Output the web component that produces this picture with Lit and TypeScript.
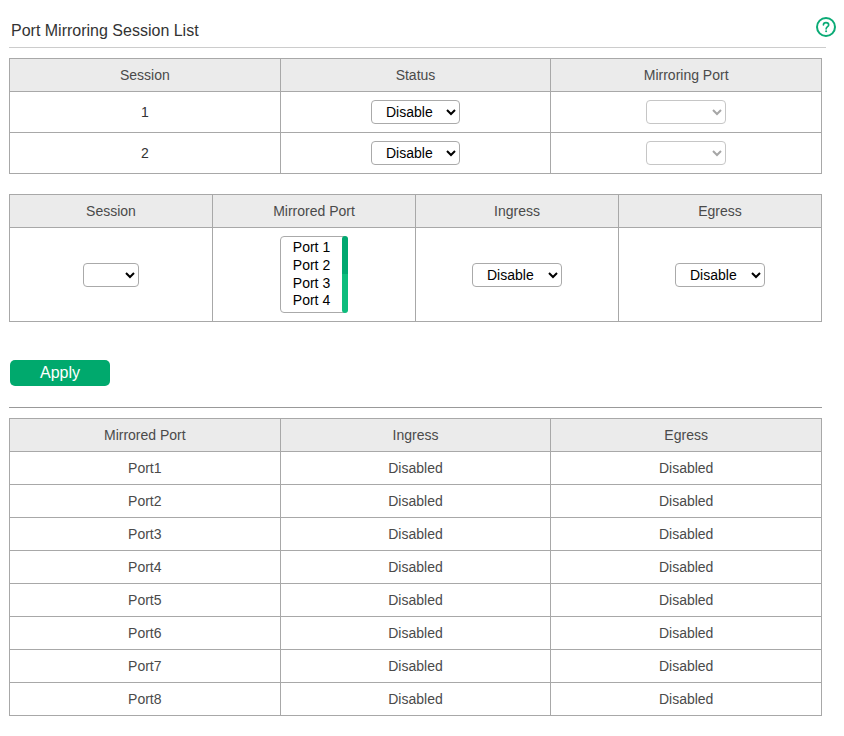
import { LitElement, html, css } from "lit";
import { customElement } from "lit/decorators.js";

@customElement("app-root")
export class AppRoot extends LitElement {
  static styles = css`
    :host {
      display: block;
      width: 844px;
      height: 736px;
      box-sizing: border-box;
      padding: 0 0 0 9px;
      background: #fff;
      font-family: "Liberation Sans", Arial, sans-serif;
      font-size: 14px;
      color: #4a4a4a;
    }
    .title-bar {
      display: flex;
      justify-content: space-between;
      width: 817px;
      height: 48px;
      box-sizing: border-box;
      border-bottom: 1px solid #ccc;
    }
    .title {
      margin: 21px 0 0 2px;
      font-size: 16px;
      line-height: 19px;
      font-weight: 400;
      color: #333;
    }
    .help {
      display: block;
      margin: 17px -10px 0 0;
      flex: none;
    }
    table {
      width: 813px;
      table-layout: fixed;
      border-collapse: collapse;
    }
    td,
    th {
      padding: 0;
      border: 1px solid #a8a8a8;
      text-align: center;
      vertical-align: middle;
      font-weight: 400;
    }
    th {
      height: 32px;
      background: #ebebeb;
    }
    .first {
      margin-top: 10px;
    }
    .first td {
      height: 40px;
      color: #333;
    }
    .second {
      margin-top: 20px;
    }
    .second td {
      height: 93px;
    }
    .third {
      margin-top: 10px;
    }
    .third td {
      height: 32px;
    }
    select {
      display: block;
      margin: 0 auto;
      box-sizing: border-box;
      height: 24px;
      padding: 0 0 0 10px;
      background-color: #fff;
      border: 1px solid #aaa;
      border-radius: 4px;
      font-family: inherit;
      font-size: 14px;
      color: #000;
    }
    .w-status { width: 89px; }
    .w-wide { width: 90px; }
    .w-mirror {
      width: 80px;
      border-color: #c6c6c6;
      color: #a6a6a6;
      opacity: 1;
    }
    .w-session { width: 56px; }
    .list {
      display: flex;
      justify-content: space-between;
      box-sizing: border-box;
      width: 68px;
      height: 77px;
      margin: 0 auto;
      border: 1px solid #aaa;
      border-radius: 4px;
      color: #000;
      text-align: center;
      line-height: 17.67px;
    }
    .opts {
      flex: 1;
      padding-top: 2.4px;
    }
    .bar {
      flex: none;
      width: 6px;
      border-radius: 3px;
      margin: -1px -1px -1px 0;
      background: linear-gradient(#00a870 0 50%, #0dbd7d 50% 100%);
    }
    .apply {
      display: block;
      width: 100px;
      height: 26px;
      margin: 38px 0 0 1px;
      padding: 0;
      border: none;
      border-radius: 5px;
      background: #00a96d;
      color: #fff;
      font-family: inherit;
      font-size: 16px;
    }
    .rule {
      width: 813px;
      height: 1px;
      margin-top: 21px;
      background: #999;
    }
  `;

  private disableSelect(cls: string) {
    return html`<select class=${cls}><option>Disable</option><option>Enable</option></select>`;
  }

  render() {
    const ports = [1, 2, 3, 4, 5, 6, 7, 8];
    return html`
      <div class="title-bar">
        <h1 class="title">Port Mirroring Session List</h1>
        <svg class="help" width="20" height="20" viewBox="0 0 20 20" fill="none" aria-label="Help">
          <circle cx="10" cy="10" r="9" stroke="#0bab76" stroke-width="2"></circle>
          <path d="M7.4 8 C7.4 6.4 8.5 5.6 10 5.6 C11.6 5.6 12.7 6.5 12.7 7.9 C12.7 9.5 10.1 9.9 10.1 11.9" stroke="#0bab76" stroke-width="1.6" stroke-linecap="round"></path>
          <circle cx="10.1" cy="14.3" r="1" fill="#0bab76"></circle>
        </svg>
      </div>

      <table class="first">
        <thead>
          <tr><th>Session</th><th>Status</th><th>Mirroring Port</th></tr>
        </thead>
        <tbody>
          ${[1, 2].map(
            (n) => html`<tr>
              <td>${n}</td>
              <td>${this.disableSelect("w-status")}</td>
              <td><select class="w-mirror" disabled><option></option></select></td>
            </tr>`
          )}
        </tbody>
      </table>

      <table class="second">
        <thead>
          <tr><th>Session</th><th>Mirrored Port</th><th>Ingress</th><th>Egress</th></tr>
        </thead>
        <tbody>
          <tr>
            <td><select class="w-session"><option></option></select></td>
            <td>
              <div class="list">
                <div class="opts">
                  <div>Port 1</div>
                  <div>Port 2</div>
                  <div>Port 3</div>
                  <div>Port 4</div>
                </div>
                <div class="bar"></div>
              </div>
            </td>
            <td>${this.disableSelect("w-wide")}</td>
            <td>${this.disableSelect("w-wide")}</td>
          </tr>
        </tbody>
      </table>

      <button class="apply">Apply</button>
      <div class="rule"></div>

      <table class="third">
        <thead>
          <tr><th>Mirrored Port</th><th>Ingress</th><th>Egress</th></tr>
        </thead>
        <tbody>
          ${ports.map(
            (n) => html`<tr><td>Port${n}</td><td>Disabled</td><td>Disabled</td></tr>`
          )}
        </tbody>
      </table>
    `;
  }
}
